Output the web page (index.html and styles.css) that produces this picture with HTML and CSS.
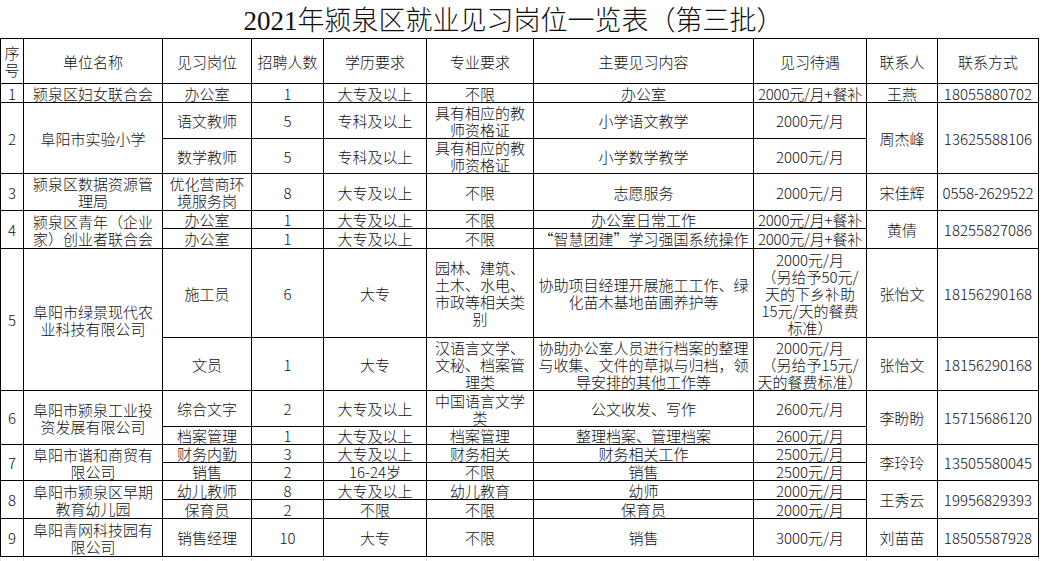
FILE: index.html
```html
<!DOCTYPE html>
<html lang="zh-CN">
<head>
<meta charset="utf-8">
<title>2021年颍泉区就业见习岗位一览表（第三批）</title>
<link rel="stylesheet" href="styles.css">
</head>
<body>
<div class="sheet">
  <div class="title">2021年颍泉区就业见习岗位一览表（第三批）</div>
  <table class="grid">
    <colgroup>
      <col class="c1"><col class="c2"><col class="c3"><col class="c4"><col class="c5">
      <col class="c6"><col class="c7"><col class="c8"><col class="c9"><col class="c10">
    </colgroup>
    <tbody>
      <tr class="h45">
        <td>序<br>号</td><td>单位名称</td><td>见习岗位</td><td>招聘人数</td><td>学历要求</td>
        <td>专业要求</td><td>主要见习内容</td><td>见习待遇</td><td>联系人</td><td>联系方式</td>
      </tr>
      <tr class="h19">
        <td>1</td><td>颍泉区妇女联合会</td><td>办公室</td><td>1</td><td>大专及以上</td>
        <td>不限</td><td>办公室</td><td class="tight">2000元/月+餐补</td><td>王燕</td><td>18055880702</td>
      </tr>
      <tr class="h36">
        <td rowspan="2">2</td><td rowspan="2">阜阳市实验小学</td><td>语文教师</td><td>5</td><td>专科及以上</td>
        <td>具有相应的教<br>师资格证</td><td>小学语文教学</td><td>2000元/月</td><td rowspan="2">周杰峰</td><td rowspan="2">13625588106</td>
      </tr>
      <tr class="h35">
        <td>数学教师</td><td>5</td><td>专科及以上</td>
        <td>具有相应的教<br>师资格证</td><td>小学数学教学</td><td>2000元/月</td>
      </tr>
      <tr class="h37">
        <td>3</td><td>颍泉区数据资源管<br>理局</td><td>优化营商环<br>境服务岗</td><td>8</td><td>大专及以上</td>
        <td>不限</td><td>志愿服务</td><td>2000元/月</td><td>宋佳辉</td><td class="tight">0558-2629522</td>
      </tr>
      <tr class="h18">
        <td rowspan="2">4</td><td rowspan="2">颍泉区青年（企业<br>家）创业者联合会</td><td>办公室</td><td>1</td><td>大专及以上</td>
        <td>不限</td><td>办公室日常工作</td><td class="tight">2000元/月+餐补</td><td rowspan="2">黄倩</td><td rowspan="2">18255827086</td>
      </tr>
      <tr class="h20">
        <td>办公室</td><td>1</td><td>大专及以上</td>
        <td>不限</td><td>“智慧团建”学习强国系统操作</td><td class="tight">2000元/月+餐补</td>
      </tr>
      <tr class="h89">
        <td rowspan="2">5</td><td rowspan="2">阜阳市绿景现代农<br>业科技有限公司</td><td>施工员</td><td>6</td><td>大专</td>
        <td>园林、建筑、<br>土木、水电、<br>市政等相关类<br>别</td>
        <td>协助项目经理开展施工工作、绿<br>化苗木基地苗圃养护等</td>
        <td>2000元/月<br>（另给予50元/<br>天的下乡补助<br>15元/天的餐费<br>标准）</td>
        <td>张怡文</td><td>18156290168</td>
      </tr>
      <tr class="h53">
        <td>文员</td><td>1</td><td>大专</td>
        <td>汉语言文学、<br>文秘、档案管<br>理类</td>
        <td>协助办公室人员进行档案的整理<br>与收集、文件的草拟与归档，领<br>导安排的其他工作等</td>
        <td>2000元/月<br>（另给予15元/<br>天的餐费标准）</td>
        <td>张怡文</td><td>18156290168</td>
      </tr>
      <tr class="h36">
        <td rowspan="2">6</td><td rowspan="2">阜阳市颍泉工业投<br>资发展有限公司</td><td>综合文字</td><td>2</td><td>大专及以上</td>
        <td>中国语言文学<br>类</td><td>公文收发、写作</td><td>2600元/月</td><td rowspan="2">李盼盼</td><td rowspan="2">15715686120</td>
      </tr>
      <tr class="h18">
        <td>档案管理</td><td>1</td><td>大专及以上</td>
        <td>档案管理</td><td>整理档案、管理档案</td><td>2600元/月</td>
      </tr>
      <tr class="h18">
        <td rowspan="2">7</td><td rowspan="2">阜阳市谐和商贸有<br>限公司</td><td>财务内勤</td><td>3</td><td>大专及以上</td>
        <td>财务相关</td><td>财务相关工作</td><td>2500元/月</td><td rowspan="2">李玲玲</td><td rowspan="2">13505580045</td>
      </tr>
      <tr class="h18">
        <td>销售</td><td>2</td><td>16-24岁</td>
        <td>不限</td><td>销售</td><td>2500元/月</td>
      </tr>
      <tr class="h19">
        <td rowspan="2">8</td><td rowspan="2">阜阳市颍泉区早期<br>教育幼儿园</td><td>幼儿教师</td><td>8</td><td>大专及以上</td>
        <td>幼儿教育</td><td>幼师</td><td>2000元/月</td><td rowspan="2">王秀云</td><td rowspan="2">19956829393</td>
      </tr>
      <tr class="h19">
        <td>保育员</td><td>2</td><td>不限</td>
        <td>不限</td><td>保育员</td><td>2000元/月</td>
      </tr>
      <tr class="h38">
        <td>9</td><td>阜阳青网科技园有<br>限公司</td><td>销售经理</td><td>10</td><td>大专</td>
        <td>不限</td><td>销售</td><td>3000元/月</td><td>刘苗苗</td><td>18505587928</td>
      </tr>
      <tr class="ghost">
        <td></td><td></td><td></td><td></td><td></td><td></td><td></td><td></td><td></td><td></td>
      </tr>
    </tbody>
  </table>
</div>
</body>
</html>
```

FILE: styles.css
```css
html, body {
  margin: 0;
  padding: 0;
  background: #ffffff;
}

body {
  font-family: "Noto Sans CJK SC", "Noto Sans", sans-serif;
  color: #000000;
  overflow: hidden;
}

.sheet {
  width: 1039px;
}

.title {
  height: 38px;
  line-height: 36px;
  padding-top: 3px;
  padding-right: 12px;
  box-sizing: border-box;
  text-align: center;
  font-family: "Liberation Serif", "Noto Sans CJK SC", serif;
  font-size: 27px;
  font-weight: 300;
  color: #111111;
  white-space: nowrap;
}

.grid {
  border-collapse: collapse;
  table-layout: fixed;
  width: 1039px;
  font-size: 15px;
  line-height: 17px;
  font-weight: 300;
}

.grid td {
  border: 1px solid #000000;
  padding: 0;
  text-align: center;
  vertical-align: middle;
  white-space: nowrap;
  overflow: hidden;
  color: #111111;
}

.grid td.tight {
  letter-spacing: -0.2px;
}

.c1 { width: 23px; }
.c2 { width: 139px; }
.c3 { width: 89px; }
.c4 { width: 72px; }
.c5 { width: 103px; }
.c6 { width: 107px; }
.c7 { width: 220px; }
.c8 { width: 113px; }
.c9 { width: 71px; }
.c10 { width: 101px; }

.h18 { height: 18px; }
.h19 { height: 19px; }
.h20 { height: 20px; }
.h35 { height: 35px; }
.h36 { height: 36px; }
.h37 { height: 37px; }
.h38 { height: 38px; }
.h45 { height: 45px; }
.h53 { height: 53px; }
.h89 { height: 89px; }

.grid tr.ghost td {
  height: 20px;
  border-color: #dedede;
}
```
